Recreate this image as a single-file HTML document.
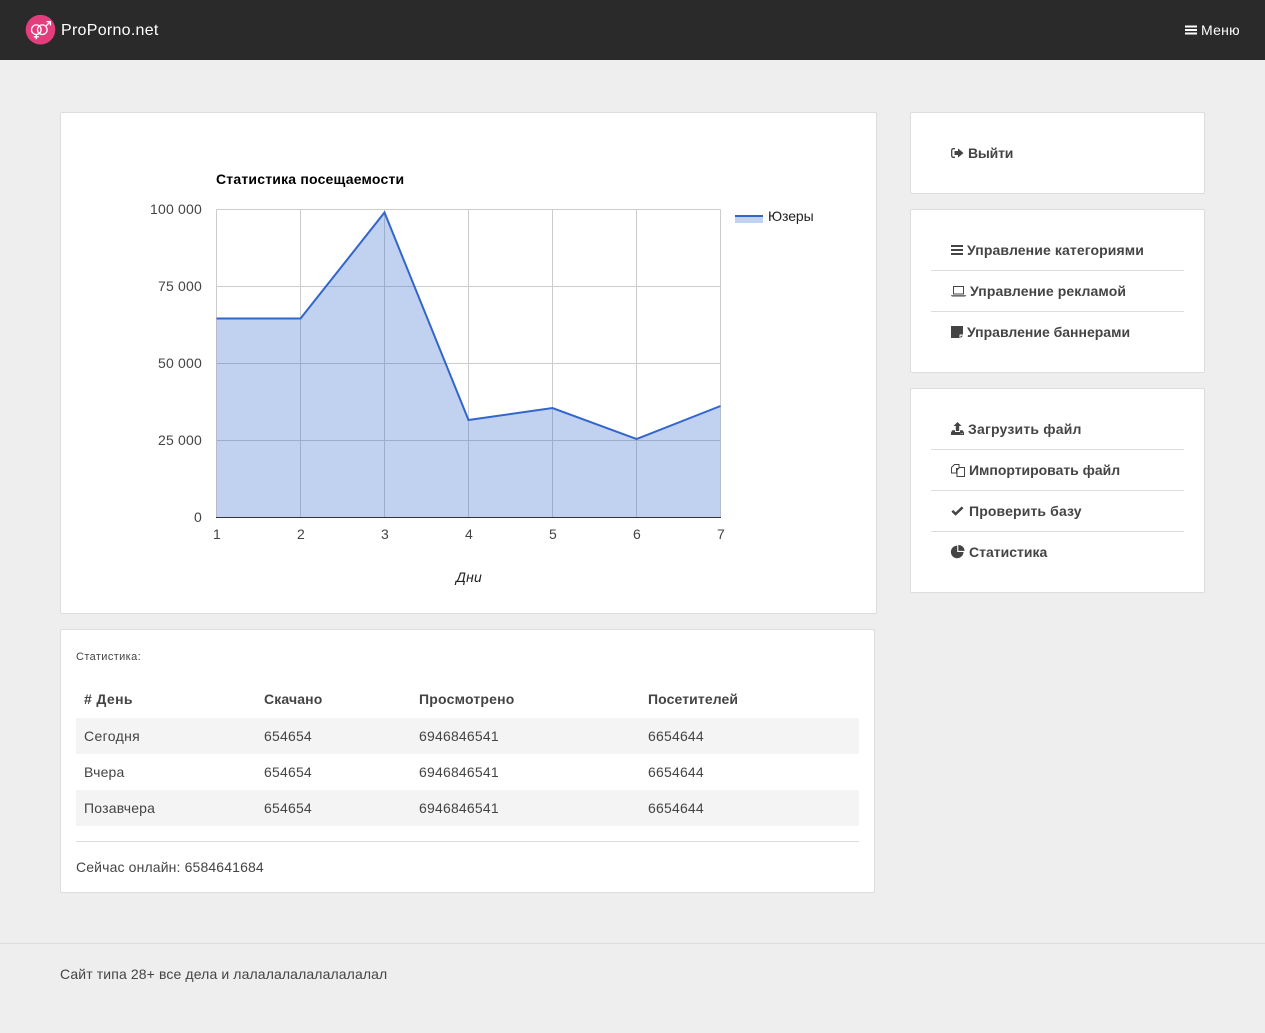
<!DOCTYPE html>
<html lang="ru"><head><meta charset="utf-8"><title>ProPorno.net</title>
<style>
*{box-sizing:border-box}
html,body{margin:0;padding:0}
body{width:1265px;height:1033px;position:relative;overflow:hidden;background:#eee;font-family:"Liberation Sans",sans-serif;font-size:14px;color:#444;letter-spacing:.2px}
.t{position:absolute;white-space:nowrap;line-height:20px}
.b{font-weight:bold}
.card{position:absolute;background:#fff;border:1px solid #ddd;border-radius:2px}
.hr{position:absolute;height:1px;background:#ddd}
.row{position:absolute;left:76px;width:783px;height:36px;background:#f4f4f4}
svg.i{position:absolute;overflow:visible}
#nav{position:absolute;left:0;top:0;width:1265px;height:60px;background:#2a2a2a}
</style></head><body>
<div id="nav"></div>
<svg class="i" style="left:25px;top:15px" width="31" height="30" viewBox="0 0 31 30">
<circle cx="15.5" cy="14.7" r="14.8" fill="#e33d7e"/>
<g fill="none" stroke="#fff" stroke-width="1.300"><circle cx="11.300" cy="14.700" r="4.800"/><circle cx="17.300" cy="14.700" r="4.800"/><path d="M11.300 19.500v4.800M8.800 21.800h5M20.700 11.300l4.300-4.300M21.500 6.600h3.900v3.900"/></g></svg>
<div class="t" style="left:61px;top:21px;font-size:16px;color:#fff;letter-spacing:.28px">ProPorno.net</div>
<svg class="i" style="left:1185px;top:25px" width="12" height="10" viewBox="0 0 12 10"><path d="M0 .5h12v2H0zM0 4h12v2H0zM0 7.5h12v2H0z" fill="#fff"/></svg>
<div class="t" style="left:1201px;top:20px;color:#fff;letter-spacing:.25px">Меню</div>

<div class="card" style="left:60px;top:112px;width:817px;height:502px"></div>
<svg style="position:absolute;left:61px;top:113px" width="815" height="500" viewBox="61 113 815 500" font-family="Liberation Sans, sans-serif" font-size="14">
<text x="216" y="184" font-weight="bold" fill="#000" letter-spacing=".2">Статистика посещаемости</text>
<g stroke="#ccc" fill="none" shape-rendering="crispEdges">
<path d="M216.500 209.500H720.500M216.500 286.500H720.500M216.500 363.500H720.500M216.500 440.500H720.500"/>
<path d="M216.500 209.500V517M300.500 209.500V517M384.500 209.500V517M468.500 209.500V517M552.500 209.500V517M636.500 209.500V517M720.500 209.500V517"/>
</g>
<path d="M216.500 318.500H300.500L384.500 212.500L468.500 420L552.500 408L636.500 439L720.500 406V517.500H216.500Z" fill="#3366cc" fill-opacity=".3"/>
<path d="M216.500 318.500H300.500L384.500 212.500L468.500 420L552.500 408L636.500 439L720.500 406" fill="none" stroke="#3366cc" stroke-width="2"/>
<path d="M216 517.500H721" stroke="#333" shape-rendering="crispEdges"/>
<g fill="#444" text-anchor="end">
<text x="202" y="214">100 000</text><text x="202" y="291">75 000</text><text x="202" y="368">50 000</text><text x="202" y="445">25 000</text><text x="202" y="522">0</text>
</g>
<g fill="#444" text-anchor="middle">
<text x="217" y="539">1</text><text x="301" y="539">2</text><text x="385" y="539">3</text><text x="469" y="539">4</text><text x="553" y="539">5</text><text x="637" y="539">6</text><text x="721" y="539">7</text>
</g>
<text x="469" y="582" text-anchor="middle" font-style="italic" fill="#222">Дни</text>
<rect x="735" y="215" width="28" height="8" fill="#3366cc" fill-opacity=".3"/>
<rect x="735" y="215" width="28" height="2" fill="#3366cc"/>
<text x="768" y="221" fill="#222" letter-spacing="-.1">Юзеры</text>
</svg>

<div class="card" style="left:60px;top:629px;width:815px;height:264px"></div>
<div class="t" style="left:76px;top:647px;font-size:11px;letter-spacing:.38px">Статистика:</div>
<div class="t b" style="left:84px;top:689px;letter-spacing:.37px"># День</div>
<div class="t b" style="left:264px;top:689px;letter-spacing:.13px">Скачано</div>
<div class="t b" style="left:419px;top:689px">Просмотрено</div>
<div class="t b" style="left:648px;top:689px;letter-spacing:.1px">Посетителей</div>
<div class="row" style="top:718px"></div>
<div class="row" style="top:790px"></div>
<div class="t" style="left:84px;top:726px;letter-spacing:.35px">Сегодня</div><div class="t" style="left:264px;top:726px">654654</div><div class="t" style="left:419px;top:726px">6946846541</div><div class="t" style="left:648px;top:726px">6654644</div>
<div class="t" style="left:84px;top:762px">Вчера</div><div class="t" style="left:264px;top:762px">654654</div><div class="t" style="left:419px;top:762px">6946846541</div><div class="t" style="left:648px;top:762px">6654644</div>
<div class="t" style="left:84px;top:798px">Позавчера</div><div class="t" style="left:264px;top:798px">654654</div><div class="t" style="left:419px;top:798px">6946846541</div><div class="t" style="left:648px;top:798px">6654644</div>
<div class="hr" style="left:76px;top:841px;width:783px"></div>
<div class="t" style="left:76px;top:857px;letter-spacing:.14px">Сейчас онлайн: 6584641684</div>

<div class="card" style="left:910px;top:112px;width:295px;height:82px"></div>
<svg class="i" style="left:951px;top:148px" width="13" height="10" viewBox="0 0 13 10"><path d="M4 .7H2.200A1.500 1.500 0 0 0 .7 2.200v5.600a1.500 1.500 0 0 0 1.500 1.500H4" fill="none" stroke="#444" stroke-width="1.300"/><path d="M3.500 3h3.500V.4L12.500 5 7 9.600V7H3.500z" fill="#444"/></svg>
<div class="t b" style="left:968px;top:143px;letter-spacing:-.2px">Выйти</div>

<div class="card" style="left:910px;top:209px;width:295px;height:164px"></div>
<svg class="i" style="left:951px;top:245px" width="12" height="10" viewBox="0 0 12 10"><path d="M0 0h12v2H0zM0 4h12v2H0zM0 8h12v2H0z" fill="#444"/></svg>
<div class="t b" style="left:967px;top:240px;letter-spacing:.11px">Управление категориями</div>
<div class="hr" style="left:931px;top:270px;width:253px"></div>
<svg class="i" style="left:951px;top:286px" width="15" height="11" viewBox="0 0 15 11"><path d="M2.500 .5h10v7.500h-10z" fill="none" stroke="#444"/><path d="M0 9.300h15v.4l-1 .8H1l-1-.8z" fill="#444"/></svg>
<div class="t b" style="left:970px;top:281px;letter-spacing:.1px">Управление рекламой</div>
<div class="hr" style="left:931px;top:311px;width:253px"></div>
<svg class="i" style="left:951px;top:326px" width="13" height="12" viewBox="0 0 13 12"><path d="M0 0h12v8.500H8.500V12H0z" fill="#444"/><path d="M9.500 9.700h2.500L9.500 12z" fill="#444"/></svg>
<div class="t b" style="left:967px;top:322px;letter-spacing:0">Управление баннерами</div>

<div class="card" style="left:910px;top:388px;width:295px;height:205px"></div>
<svg class="i" style="left:951px;top:422px" width="13" height="13" viewBox="0 0 13 13"><path d="M6.500 0l4 4H8.200v5H4.800V4H2.500z" fill="#444"/><path d="M1.300 8.300H4v1.700h5V8.300h2.700L13 10.500V13H0v-2.500z" fill="#444"/><path d="M9.500 11.200h1v.8h-1zM11 11.200h1v.8h-1z" fill="#ddd"/></svg>
<div class="t b" style="left:968px;top:419px">Загрузить файл</div>
<div class="hr" style="left:931px;top:449px;width:253px"></div>
<svg class="i" style="left:951px;top:464px" width="14" height="13" viewBox="0 0 14 13"><g fill="#fff" stroke="#444"><path d="M3.500.5h4.500v4h-2.500v4.500h-5V3.500z"/><path d="M8.500 3.500h5v9h-7.500V6z"/></g></svg>
<div class="t b" style="left:969px;top:460px;letter-spacing:-.02px">Импортировать файл</div>
<div class="hr" style="left:931px;top:490px;width:253px"></div>
<svg class="i" style="left:951px;top:506px" width="13" height="10" viewBox="0 0 13 10"><path d="M1.300 4.800l3.300 3.200 7-6.700" fill="none" stroke="#444" stroke-width="2.500"/></svg>
<div class="t b" style="left:969px;top:501px;letter-spacing:.13px">Проверить базу</div>
<div class="hr" style="left:931px;top:531px;width:253px"></div>
<svg class="i" style="left:951px;top:545px" width="14" height="13" viewBox="0 0 14 13"><path d="M6.200 .6V7h6.300A6.300 6.300 0 1 1 6.200 .6z" fill="#444"/><path d="M7.300 0A6.200 6.200 0 0 1 13.600 5.900H7.300z" fill="#444"/></svg>
<div class="t b" style="left:969px;top:542px;letter-spacing:0">Статистика</div>

<div class="hr" style="left:0;top:943px;width:1265px"></div>
<div class="t" style="left:60px;top:964px;letter-spacing:.12px">Сайт типа 28+ все дела и лалалалалалалалалал</div>
</body></html>
